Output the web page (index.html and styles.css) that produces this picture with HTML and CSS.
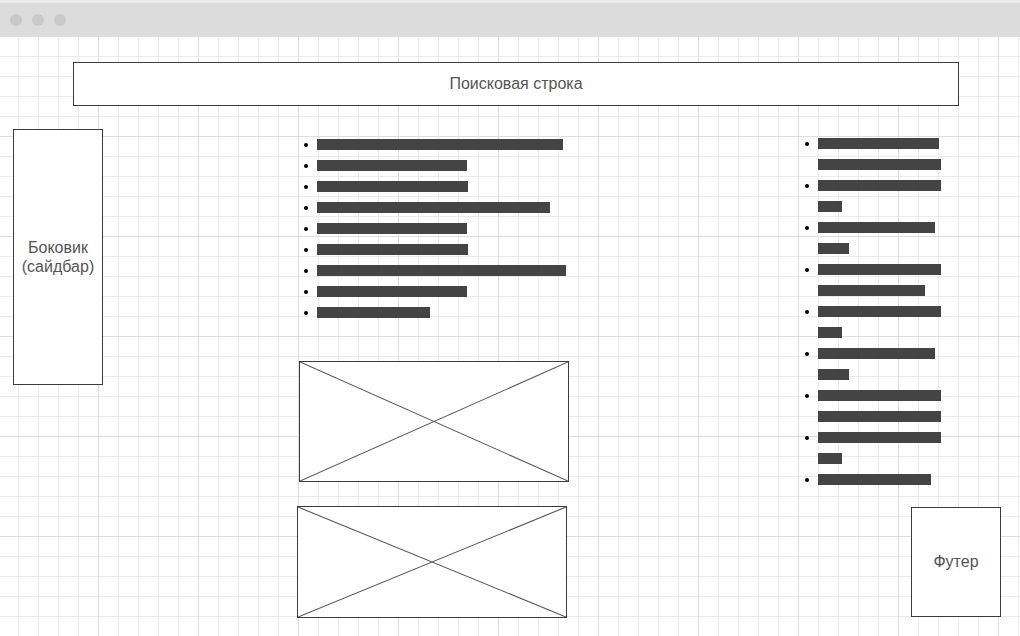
FILE: index.html
```html
<!DOCTYPE html>
<html lang="ru">
<head>
<meta charset="utf-8">
<title>Wireframe</title>
<link rel="stylesheet" href="styles.css">
</head>
<body>
<div class="window">
  <div class="titlebar">
    <span class="dot"></span><span class="dot"></span><span class="dot"></span>
  </div>
  <main class="canvas">
    <div class="search">Поисковая строка</div>
    <div class="content">
      <aside class="sidebar">Боковик<br>(сайдбар)</aside>
      <section class="mid">
        <ul class="blist">
          <li><span class="bar" style="width:246px"></span></li>
          <li><span class="bar" style="width:150px"></span></li>
          <li><span class="bar" style="width:151px"></span></li>
          <li><span class="bar" style="width:233px"></span></li>
          <li><span class="bar" style="width:150px"></span></li>
          <li><span class="bar" style="width:151px"></span></li>
          <li><span class="bar" style="width:249px"></span></li>
          <li><span class="bar" style="width:150px"></span></li>
          <li><span class="bar" style="width:113px"></span></li>
        </ul>
        <div class="pic pic-a">
          <svg viewBox="0 0 100 100" preserveAspectRatio="none"><line x1="0" y1="0" x2="100" y2="100" vector-effect="non-scaling-stroke"/><line x1="0" y1="100" x2="100" y2="0" vector-effect="non-scaling-stroke"/></svg>
        </div>
        <div class="pic pic-b">
          <svg viewBox="0 0 100 100" preserveAspectRatio="none"><line x1="0" y1="0" x2="100" y2="100" vector-effect="non-scaling-stroke"/><line x1="0" y1="100" x2="100" y2="0" vector-effect="non-scaling-stroke"/></svg>
        </div>
      </section>
      <section class="right">
        <ul class="blist blist-r">
          <li><span class="bar" style="width:121px"></span><span class="bar" style="width:123px"></span></li>
          <li><span class="bar" style="width:123px"></span><span class="bar" style="width:24px"></span></li>
          <li><span class="bar" style="width:117px"></span><span class="bar" style="width:31px"></span></li>
          <li><span class="bar" style="width:123px"></span><span class="bar" style="width:107px"></span></li>
          <li><span class="bar" style="width:123px"></span><span class="bar" style="width:24px"></span></li>
          <li><span class="bar" style="width:117px"></span><span class="bar" style="width:31px"></span></li>
          <li><span class="bar" style="width:123px"></span><span class="bar" style="width:123px"></span></li>
          <li><span class="bar" style="width:123px"></span><span class="bar" style="width:24px"></span></li>
          <li><span class="bar" style="width:113px"></span></li>
        </ul>
        <footer class="footer">Футер</footer>
      </section>
    </div>
  </main>
</div>
</body>
</html>
```

FILE: styles.css
```css
html, body {
  margin: 0;
  padding: 0;
  width: 1020px;
  height: 636px;
  overflow: hidden;
  background: #ffffff;
  font-family: "Liberation Sans", Arial, sans-serif;
}

.window {
  width: 1020px;
  height: 636px;
  display: flex;
  flex-direction: column;
}

.titlebar {
  box-sizing: border-box;
  height: 36px;
  border-top: 3px solid #ebebeb;
  background: #dcdcdc;
  display: flex;
  align-items: center;
  gap: 10px;
  padding-left: 10px;
  flex: none;
}

.dot {
  width: 12px;
  height: 12px;
  border-radius: 50%;
  background: #c9c9c9;
}

.canvas {
  flex: 1;
  box-sizing: border-box;
  padding-top: 26px;
  background-color: #ffffff;
  background-image:
    linear-gradient(to right, #dedede 1px, transparent 1px),
    linear-gradient(to bottom, #dedede 1px, transparent 1px),
    linear-gradient(to right, #ebebeb 1px, transparent 1px),
    linear-gradient(to bottom, #ebebeb 1px, transparent 1px);
  background-size: 100px 100px, 100px 100px, 20px 20px, 20px 20px;
  background-position: 98px 0, 0 0, 18px 0, 0 0;
}

.search {
  box-sizing: border-box;
  margin-left: 73px;
  width: 886px;
  height: 44px;
  border: 1px solid #3d3d3d;
  background: #fff;
  display: flex;
  align-items: center;
  justify-content: center;
  font-size: 16px;
  color: #555;
}

.content {
  display: flex;
  align-items: flex-start;
  margin-top: 23px;
}

.sidebar {
  box-sizing: border-box;
  margin-left: 13px;
  width: 90px;
  height: 256px;
  border: 1px solid #3d3d3d;
  background: #fff;
  display: flex;
  align-items: center;
  justify-content: center;
  text-align: center;
  font-size: 16px;
  line-height: 19px;
  color: #555;
  flex: none;
}

.mid {
  margin-left: 194px;
  width: 272px;
  display: flex;
  flex-direction: column;
  flex: none;
}

.blist {
  list-style: none;
  margin: 10px 0 0 0;
  padding: 0;
}

.blist li {
  position: relative;
  padding-left: 20px;
  display: flex;
  flex-direction: column;
  align-items: flex-start;
}

.blist li::before {
  content: "";
  position: absolute;
  left: 7px;
  top: 4px;
  width: 4px;
  height: 4px;
  border-radius: 50%;
  background: #000;
}

.bar {
  display: block;
  height: 11px;
  margin-bottom: 10px;
  background: #444;
}

.pic {
  box-sizing: border-box;
  width: 270px;
  border: 1px solid #3d3d3d;
  background: #fff;
}

.pic svg {
  display: block;
  width: 100%;
  height: 100%;
}

.pic line {
  stroke: #555;
  stroke-width: 1.1;
}

.pic-a {
  margin-left: 2px;
  margin-top: 33px;
  height: 121px;
}

.pic-b {
  margin-top: 24px;
  height: 112px;
}

.right {
  margin-left: 228px;
  width: 204px;
  display: flex;
  flex-direction: column;
  flex: none;
}

.blist-r {
  margin-top: 9px;
}

.blist-r li {
  padding-left: 21px;
}

.blist-r li::before {
  left: 8px;
}

.footer {
  box-sizing: border-box;
  align-self: flex-end;
  margin-top: 12px;
  width: 90px;
  height: 110px;
  border: 1px solid #3d3d3d;
  background: #fff;
  display: flex;
  align-items: center;
  justify-content: center;
  font-size: 16px;
  color: #555;
}
```
